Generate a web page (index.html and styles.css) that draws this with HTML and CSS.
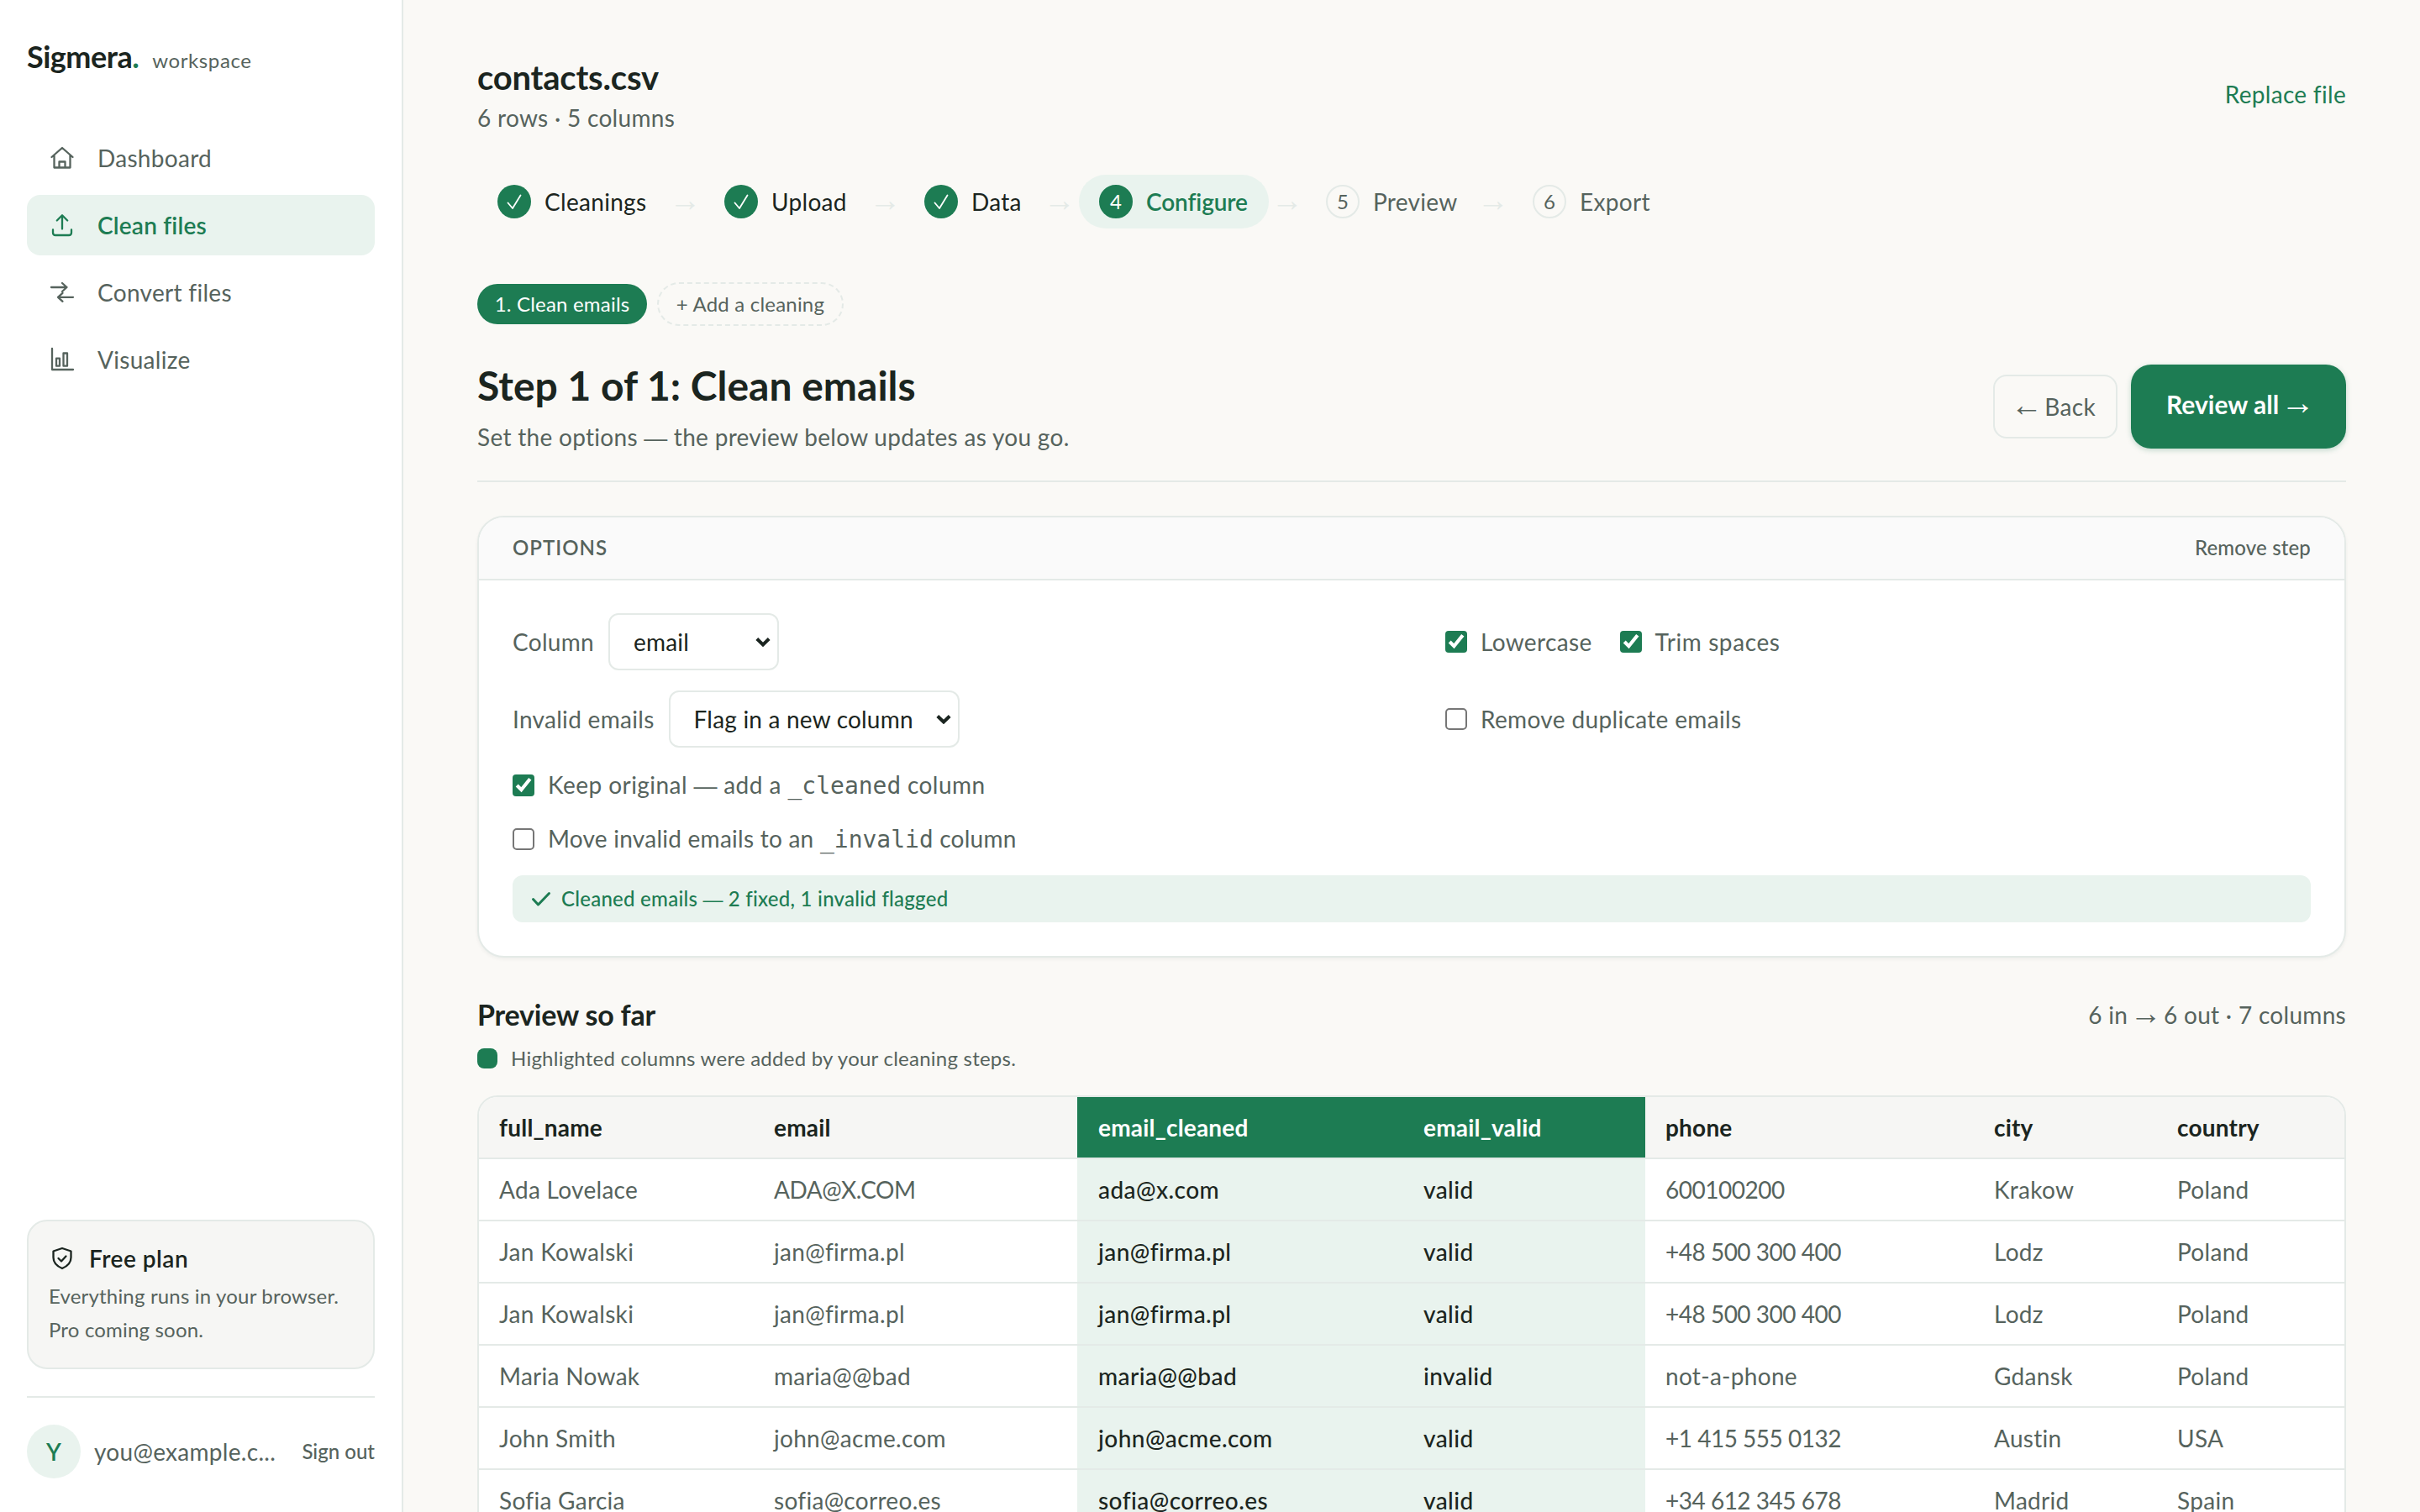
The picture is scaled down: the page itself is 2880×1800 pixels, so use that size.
FILE: index.html
```
<!DOCTYPE html>
<html lang="en">
<head>
    <meta charset="UTF-8">
    <title>Sigmera workspace</title>
    <meta name="viewport" content="width=device-width,initial-scale=1.0">
  <link rel="stylesheet" href="styles.css">
</head>
<body>
<div class="app">
  <aside class="sidebar">
    <div class="logo">Sigmera<i>.</i><span>workspace</span></div>
    <nav class="nav">
      <a class="nav-item">
        <svg viewBox="0 0 36 36"><path d="M5.500 17L18 6l12.500 11M8.500 14.500v15h19v-15M14.500 29.500V22.500h7v7"/></svg>
        Dashboard
      </a>
      <a class="nav-item active">
        <svg viewBox="0 0 36 36"><path d="M18 22.500V6.500M11.800 12.500L18 6.300l6.200 6.200M7 23.500v3.500q0 3 3 3h16q3 0 3-3v-3.500"/></svg>
        Clean files
      </a>
      <a class="nav-item">
        <svg viewBox="0 0 36 36"><path d="M5 12h18.500M18 7l5.500 5-5.500 5M31 23.800H13M18.500 18.800l-5.500 5 5.500 5"/></svg>
        Convert files
      </a>
      <a class="nav-item">
        <svg viewBox="0 0 36 36"><path d="M6 5v25h25"/><rect x="11" y="16.700" width="4" height="9"/><rect x="19.500" y="10.500" width="4.500" height="15.200"/></svg>
        Visualize
      </a>
    </nav>
    <div class="plan">
      <div class="plan-title">
        <svg viewBox="0 0 32 32"><path d="M16 4l10.500 3.500v7.500c0 6.500-4.500 10.500-10.500 13-6-2.500-10.500-6.500-10.500-13V7.500z"/><path d="M11.500 16l3.500 3.500 5.500-6"/></svg>
        Free plan
      </div>
      <p>Everything runs in your browser.<br>Pro coming soon.</p>
    </div>
    <div class="user">
      <div class="avatar">Y</div>
      <div class="mail">you@example.c...</div>
      <a class="signout">Sign out</a>
    </div>
  </aside>

  <main class="main">
    <header class="file">
      <div>
        <h1>contacts.csv</h1>
        <p>6 rows · 5 columns</p>
      </div>
      <a class="replace">Replace file</a>
    </header>

    <div class="steps">
      <div class="step done"><b><svg viewBox="0 0 40 40"><path d="M12.500 21.500l5.500 6.500 9.500-15.500"/></svg></b>Cleanings</div>
      <span class="next"><span class="arrow">→</span></span>
      <div class="step done"><b><svg viewBox="0 0 40 40"><path d="M12.500 21.500l5.500 6.500 9.500-15.500"/></svg></b>Upload</div>
      <span class="next"><span class="arrow">→</span></span>
      <div class="step done"><b><svg viewBox="0 0 40 40"><path d="M12.500 21.500l5.500 6.500 9.500-15.500"/></svg></b>Data</div>
      <span class="next"><span class="arrow">→</span></span>
      <div class="step current"><b>4</b>Configure</div>
      <span class="next"><span class="arrow">→</span></span>
      <div class="step"><b>5</b>Preview</div>
      <span class="next"><span class="arrow">→</span></span>
      <div class="step"><b>6</b>Export</div>
    </div>

    <div class="chips">
      <span class="chip">1. Clean emails</span>
      <span class="chip add">+ Add a cleaning</span>
    </div>

    <section class="title">
      <div>
        <h2>Step 1 of 1: Clean emails</h2>
        <p>Set the options <span class="dash">—</span> the preview below updates as you go.</p>
      </div>
      <div class="actions">
        <a class="back"><span class="arrow">←</span> Back</a>
        <a class="review">Review all <span class="arrow">→</span></a>
      </div>
    </section>

    <section class="panel">
      <div class="panel-head">
        <span class="caption">OPTIONS</span>
        <a class="remove">Remove step</a>
      </div>
      <div class="panel-body">
        <div class="options">
          <div class="field">Column
            <select class="s-col"><option>email</option></select>
          </div>
          <div class="field">
            <label class="check"><input type="checkbox" checked>Lowercase</label>
            <label class="check trim"><input type="checkbox" checked>Trim spaces</label>
          </div>
          <div class="field">Invalid emails
            <select class="s-flag"><option>Flag in a new column</option></select>
          </div>
          <div class="field">
            <label class="check"><input type="checkbox">Remove duplicate emails</label>
          </div>
        </div>
        <label class="check line keep"><input type="checkbox" checked><span>Keep original <span class="dash">—</span> add a <code>_cleaned</code> column</span></label>
        <label class="check line"><input type="checkbox"><span>Move invalid emails to an <code>_invalid</code> column</span></label>
        <div class="result">
          <svg viewBox="0 0 24 24"><path d="M2.500 12.500l6 6.500L21.500 5.500"/></svg>
          <span>Cleaned emails <span class="dash">—</span> 2 fixed, 1 invalid flagged</span>
        </div>
      </div>
    </section>

    <div class="preview-head">
      <h3>Preview so far</h3>
      <p>6 in <span class="arrow">→</span> 6 out · 7 columns</p>
    </div>
    <div class="legend"><i></i>Highlighted columns were added by your cleaning steps.</div>

    <div class="table-wrap">
      <table class="table">
        <colgroup>
          <col class="c1"><col class="c2"><col class="c3"><col class="c4"><col class="c5"><col class="c6"><col class="c7">
        </colgroup>
        <tr><th>full_name</th><th>email</th><th class="new">email_cleaned</th><th class="new">email_valid</th><th>phone</th><th>city</th><th>country</th></tr>
        <tr><td>Ada Lovelace</td><td class="num">ADA@X.COM</td><td class="new">ada@x.com</td><td class="new">valid</td><td class="num">600100200</td><td>Krakow</td><td>Poland</td></tr>
        <tr><td>Jan Kowalski</td><td>jan@firma.pl</td><td class="new">jan@firma.pl</td><td class="new">valid</td><td class="num">+48 500 300 400</td><td>Lodz</td><td>Poland</td></tr>
        <tr><td>Jan Kowalski</td><td>jan@firma.pl</td><td class="new">jan@firma.pl</td><td class="new">valid</td><td class="num">+48 500 300 400</td><td>Lodz</td><td>Poland</td></tr>
        <tr><td>Maria Nowak</td><td>maria@@bad</td><td class="new">maria@@bad</td><td class="new">invalid</td><td>not-a-phone</td><td>Gdansk</td><td>Poland</td></tr>
        <tr><td>John Smith</td><td>john@acme.com</td><td class="new">john@acme.com</td><td class="new">valid</td><td class="num">+1 415 555 0132</td><td>Austin</td><td>USA</td></tr>
        <tr><td>Sofia Garcia</td><td>sofia@correo.es</td><td class="new">sofia@correo.es</td><td class="new">valid</td><td class="num">+34 612 345 678</td><td>Madrid</td><td>Spain</td></tr>
      </table>
    </div>
  </main>
</div>
</body>
</html>
```
FILE: styles.css
```
*{
  margin: 0;
  padding: 0;
  box-sizing: border-box;
}
:root{
  --green: #1d7c53;
  --soft: #e9f3ee;
  --line: #e4eae7;
  --ink: #1b2520;
  --muted: #56635d;
}
body{
  background: #faf9f6;
  color: var(--muted);
  font: 28px/44px Lato, sans-serif;
  letter-spacing: .3px;
}
svg{
  fill: none;
  stroke: currentColor;
  stroke-width: 2.3;
  stroke-linecap: round;
  stroke-linejoin: round;
  flex-shrink: 0;
}
.dash,
.arrow{
  font-family: "Liberation Sans", sans-serif;
  letter-spacing: 0;
}
.arrow{
  margin: 0 -5px;
  font-size: 1.35em;
  font-weight: 400;
  line-height: 0;
}
.app{
  display: flex;
  height: 1800px;
  overflow: hidden;
}

/* sidebar */
.sidebar{
  display: flex;
  flex-direction: column;
  flex-shrink: 0;
  width: 480px;
  padding: 43px 32px 40px;
  background: #fff;
  border-right: 2px solid var(--line);
}
.logo{
  height: 48px;
  line-height: 48px;
  color: var(--ink);
  font-size: 36px;
  font-weight: 700;
  letter-spacing: -.5px;
}
.logo i{
  font-style: normal;
  color: var(--green);
}
.logo span{
  margin-left: 16px;
  color: var(--muted);
  font-size: 24px;
  font-weight: 400;
  letter-spacing: .6px;
}
.nav{
  display: flex;
  flex-direction: column;
  gap: 8px;
  margin-top: 61px;
}
.nav-item{
  display: flex;
  align-items: center;
  gap: 24px;
  height: 72px;
  padding: 0 24px;
  border-radius: 16px;
}
.nav-item svg{
  width: 36px;
  height: 36px;
}
.nav-item.active{
  background: var(--soft);
  color: var(--green);
  font-weight: 600;
  letter-spacing: .2px;
}
.plan{
  height: 178px;
  margin-top: auto;
  padding: 22px 24px;
  border: 2px solid var(--line);
  border-radius: 24px;
  background: #f6f6f4;
}
.plan-title{
  display: flex;
  align-items: center;
  gap: 16px;
  height: 44px;
  color: var(--ink);
  font-weight: 600;
  letter-spacing: .5px;
}
.plan-title svg{
  width: 32px;
  height: 32px;
}
.plan p{
  margin-top: 3px;
  font-size: 24px;
  line-height: 40px;
  letter-spacing: .18px;
}
.user{
  display: flex;
  align-items: center;
  height: 98px;
  margin-top: 32px;
  padding-top: 32px;
  border-top: 2px solid var(--line);
}
.avatar{
  width: 64px;
  height: 64px;
  border-radius: 50%;
  background: var(--soft);
  color: var(--green);
  font-weight: 600;
  line-height: 64px;
  text-align: center;
}
.mail{
  margin-left: 16px;
  white-space: nowrap;
}
.signout{
  margin-left: auto;
  font-size: 24px;
  font-weight: 500;
  letter-spacing: 0;
  white-space: nowrap;
}

/* main column */
.main{
  width: 2400px;
  padding: 68px 88px 0;
}
.file{
  display: flex;
  justify-content: space-between;
  height: 92px;
}
h1{
  height: 50px;
  line-height: 48px;
  color: var(--ink);
  font-size: 40px;
  font-weight: 700;
  letter-spacing: -.2px;
}
.replace{
  margin-top: 22px;
  color: var(--green);
  letter-spacing: .3px;
}
.steps{
  display: grid;
  grid-template-columns: 225px 45px 193px 45px 162px 46px 226px 44px 200px 46px 188px;
  height: 64px;
  margin-top: 48px;
}
.step{
  display: flex;
  align-items: center;
  gap: 16px;
  padding-left: 24px;
  border-radius: 32px;
  white-space: nowrap;
}
.step b{
  width: 40px;
  height: 40px;
  border: 2px solid var(--line);
  border-radius: 50%;
  font-size: 24px;
  font-weight: 400;
  line-height: 36px;
  text-align: center;
  letter-spacing: 0;
}
.step b svg{
  display: block;
  width: 40px;
  height: 40px;
  stroke-width: 1.8;
}
.step.done{
  color: var(--ink);
}
.step.done b{
  border: 0;
  background: var(--green);
  color: #fff;
}
.step.current{
  background: var(--soft);
  color: var(--green);
  font-weight: 600;
  letter-spacing: -.1px;
}
.step.current b{
  border-color: var(--green);
  background: var(--green);
  color: #fff;
}
.next{
  color: var(--line);
  line-height: 64px;
  text-align: center;
}
.chips{
  display: flex;
  align-items: center;
  gap: 12px;
  height: 52px;
  margin-top: 64px;
}
.chip{
  width: 202px;
  height: 48px;
  border-radius: 26px;
  background: var(--green);
  color: #fff;
  font-size: 24px;
  line-height: 47px;
  text-align: center;
  letter-spacing: .2px;
}
.chip.add{
  width: 222px;
  height: 52px;
  border: 2px dashed var(--line);
  background: none;
  color: var(--muted);
}
.title{
  display: flex;
  justify-content: space-between;
  height: 186px;
  padding-top: 46px;
  border-bottom: 2px solid var(--line);
}
h2{
  margin-top: -9px;
  height: 72px;
  line-height: 68px;
  color: var(--ink);
  font-size: 48px;
  font-weight: 700;
  letter-spacing: 0;
}
.title p{
  margin-top: 1px;
}
.actions{
  display: flex;
  align-items: center;
  gap: 16px;
  height: 100px;
}
.back{
  width: 148px;
  height: 76px;
  border: 2px solid var(--line);
  border-radius: 16px;
  line-height: 72px;
  text-align: center;
}
.review{
  width: 256px;
  height: 100px;
  border-radius: 24px;
  background: var(--green);
  box-shadow: 0 2px 6px rgba(29,124,83,.25);
  color: #fff;
  font-size: 30px;
  font-weight: 700;
  line-height: 94px;
  text-align: center;
  letter-spacing: 0;
}
.review .arrow{
  font-weight: 700;
}

/* options panel */
.panel{
  height: 526px;
  margin-top: 40px;
  border: 2px solid var(--line);
  border-radius: 32px;
  background: #fff;
  box-shadow: 0 2px 4px rgba(27,37,32,.05);
  overflow: hidden;
}
.panel-head{
  display: flex;
  justify-content: space-between;
  align-items: center;
  height: 75px;
  padding: 0 40px 2px;
  border-bottom: 2px solid var(--line);
  background: #fafafa;
  font-size: 24px;
}
.caption{
  font-weight: 600;
  letter-spacing: 1px;
}
.remove{
  font-weight: 500;
  letter-spacing: .15px;
}
.panel-body{
  padding: 39px 40px;
}
.options{
  display: grid;
  grid-template-columns: 1fr 1fr;
  grid-template-rows: 68px 68px;
  gap: 24px 80px;
}
.field{
  display: flex;
  align-items: center;
  gap: 17px;
}
select{
  zoom: 2;
  height: 34px;
  padding: 0 0 0 14px;
  border: 1px solid var(--line);
  border-radius: 6px;
  appearance: none;
  background: #fff url("data:image/svg+xml,%3Csvg xmlns='http://www.w3.org/2000/svg' viewBox='0 0 18 12'%3E%3Cpath d='M1.800 2.500L9 9.500l7.200-7' fill='none' stroke='%231b2520' stroke-width='4'/%3E%3C/svg%3E") no-repeat right 4px center / 9px 6px;
  color: var(--ink);
  font: 14px Lato, sans-serif;
  letter-spacing: .1px;
}
.s-col{
  width: 101.5px;
}
.s-flag{
  width: 173px;
}
.check{
  display: flex;
  align-items: center;
  gap: 16px;
}
.check input{
  zoom: 2;
  width: 13px;
  height: 13px;
  accent-color: var(--green);
}
.trim{
  margin-left: 16px;
  letter-spacing: .6px;
}
.field .check:first-child{
  letter-spacing: .35px;
}
.line{
  height: 64px;
  letter-spacing: .25px;
}
.keep{
  margin-top: 13px;
  letter-spacing: .45px;
}
code{
  font-family: "DejaVu Sans Mono", monospace;
  font-size: 28px;
  letter-spacing: 0;
}
.result{
  display: flex;
  align-items: center;
  gap: 12px;
  height: 56px;
  margin-top: 11px;
  padding-left: 22px;
  border-radius: 12px;
  background: var(--soft);
  color: var(--green);
  font-size: 24px;
  font-weight: 500;
  letter-spacing: .25px;
}
.result svg{
  width: 24px;
  height: 24px;
  stroke-width: 3;
}

/* preview */
.preview-head{
  display: flex;
  justify-content: space-between;
  align-items: center;
  height: 48px;
  margin-top: 44px;
}
h3{
  color: var(--ink);
  font-size: 34px;
  font-weight: 700;
  letter-spacing: -.2px;
}
.legend{
  display: flex;
  align-items: center;
  gap: 16px;
  height: 40px;
  margin-top: 8px;
  font-size: 24px;
  letter-spacing: .24px;
}
.legend i{
  width: 24px;
  height: 24px;
  border-radius: 8px;
  background: var(--green);
}
.table-wrap{
  margin-top: 24px;
  border: 2px solid var(--line);
  border-radius: 24px;
  background: #fff;
  overflow: hidden;
}
.table{
  width: 2220px;
  table-layout: fixed;
  border-collapse: separate;
  border-spacing: 0;
}
.c1{ width: 327px; }
.c2{ width: 385px; }
.c3{ width: 387px; }
.c4{ width: 289px; }
.c5{ width: 391px; }
.c6{ width: 218px; }
.c7{ width: 223px; }
.table th,
.table td{
  height: 74px;
  padding: 0 24px;
  border-bottom: 2px solid var(--line);
  text-align: left;
  white-space: nowrap;
}
.table th{
  background: #f6f6f4;
  color: var(--ink);
  font-weight: 700;
  letter-spacing: .2px;
}
.table th.new{
  background: var(--green);
  color: #fff;
}
.table td.new{
  background: var(--soft);
  color: var(--ink);
  font-weight: 500;
  letter-spacing: .45px;
}
.table .new{
  padding-left: 25px;
}
.table td.num{
  letter-spacing: -.5px;
}
```
